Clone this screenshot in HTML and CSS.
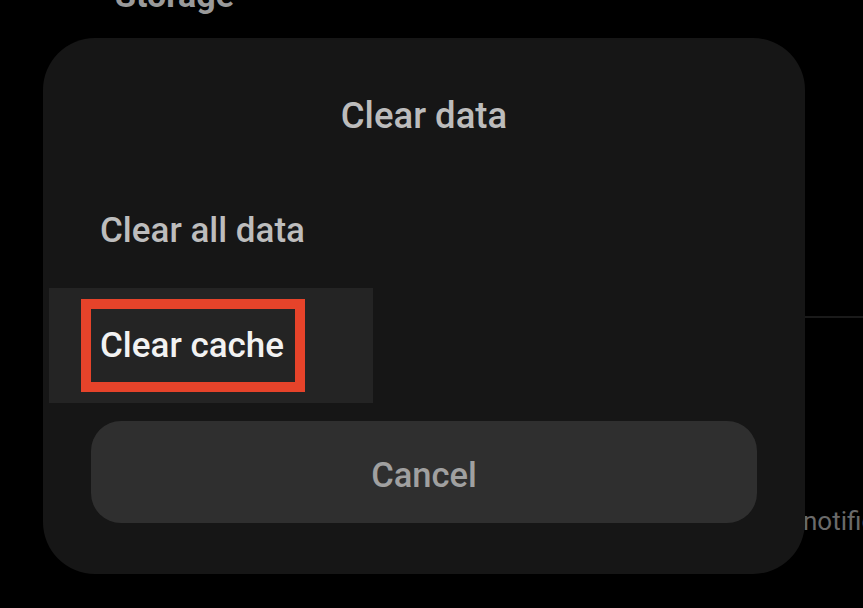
FILE: index.html
```html
<!DOCTYPE html>
<html lang="en">
<head>
<meta charset="utf-8">
<title>Clear data</title>
<link rel="stylesheet" href="styles.css">
</head>
<body>
<div class="page">
  <div class="section-title">Storage</div>
  <div class="divider"></div>
  <div class="setting-sub">notifications</div>
</div>
<div class="dialog">
  <div class="dialog-title">Clear data</div>
  <div class="options">
    <div class="option"><span class="option-label">Clear all data</span></div>
    <div class="option option-pressed">
      <span class="highlight-box"><span class="option-label option-label-active">Clear cache</span></span>
    </div>
  </div>
  <div class="cancel-btn">Cancel</div>
</div>
</body>
</html>
```

FILE: styles.css
```css
html, body {
  margin: 0;
  padding: 0;
  background: #000;
  width: 863px;
  height: 608px;
  overflow: hidden;
  font-family: Roboto, "Noto Sans", "Liberation Sans", sans-serif;
}

.page {
  display: flex;
  flex-direction: column;
}

.section-title {
  margin-top: -22px;
  margin-left: 115px;
  font-size: 34px;
  line-height: 34px;
  font-weight: 700;
  color: #9a9a9a;
}

.divider {
  margin-top: 304px;
  margin-left: 115px;
  height: 2px;
  background: #1a1a1a;
}

.setting-sub {
  margin-top: 188px;
  margin-left: 803px;
  font-size: 26px;
  line-height: 30px;
  color: #6a6a6a;
  white-space: nowrap;
}

.dialog {
  position: absolute;
  left: 43px;
  top: 38px;
  width: 762px;
  height: 536px;
  box-sizing: border-box;
  padding: 58px 0 51px;
  background: #161616;
  border-radius: 52px;
  display: flex;
  flex-direction: column;
}

.dialog-title {
  text-align: center;
  font-size: 36.5px;
  line-height: 40px;
  font-weight: 500;
  color: #bcbcbc;
}

.options {
  margin-top: 37px;
  display: flex;
  flex-direction: column;
}

.option {
  height: 115px;
  display: flex;
  align-items: center;
  padding-left: 57px;
}

.option-label {
  font-size: 35px;
  line-height: 40px;
  font-weight: 500;
  color: #bdbdbd;
  white-space: nowrap;
}

.option-pressed {
  margin-left: 6px;
  width: 324px;
  padding-left: 32px;
  box-sizing: border-box;
  background: #242424;
}

.highlight-box {
  display: block;
  border: 10px solid #e6432a;
  padding: 17px 11px 16px 9px;
}

.option-label-active {
  display: block;
  color: #f2f2f2;
}

.cancel-btn {
  margin: 18px 48px 0;
  height: 102px;
  box-sizing: border-box;
  padding-top: 5px;
  border-radius: 30px;
  background: #2f2f2f;
  display: flex;
  align-items: center;
  justify-content: center;
  font-size: 34.5px;
  line-height: 40px;
  font-weight: 500;
  color: #a0a0a0;
}
```
